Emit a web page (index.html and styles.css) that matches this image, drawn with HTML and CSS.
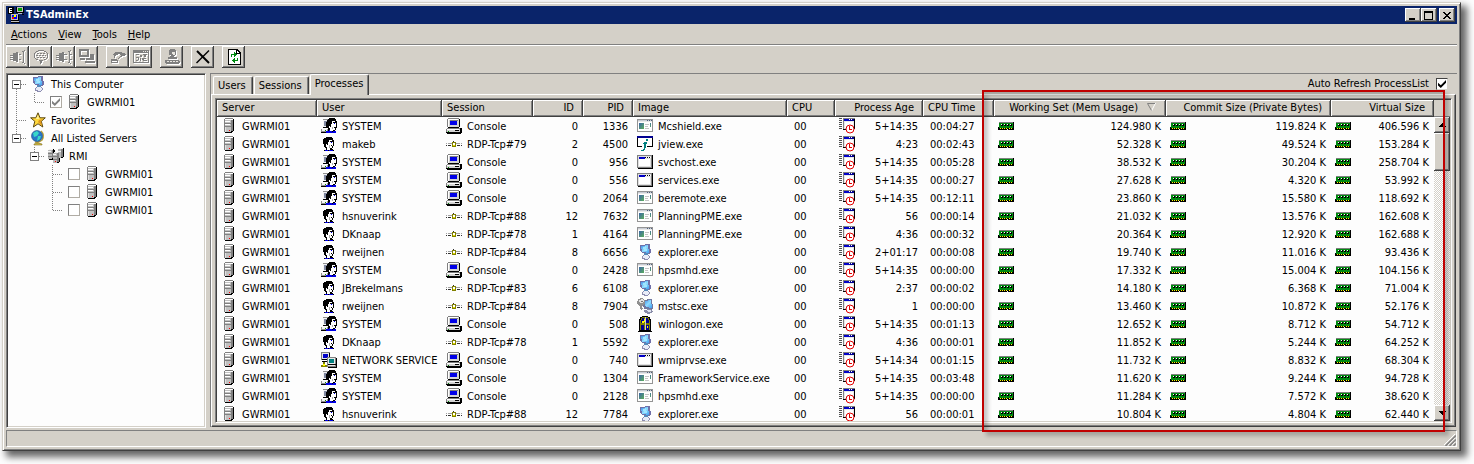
FILE: index.html
```html
<!DOCTYPE html>
<html lang="en">
<head>
<meta charset="utf-8">
<title>TSAdminEx</title>
<link rel="stylesheet" href="styles.css">
</head>
<body>
<svg class="sprite" aria-hidden="true">
  <linearGradient id="g-screen" x1="0" y1="0" x2="1" y2="1"><stop offset="0" stop-color="#3a8ae8"/><stop offset=".5" stop-color="#8fdcff"/><stop offset="1" stop-color="#3f9cf0"/></linearGradient>
  <linearGradient id="g-exe" x1="0" y1="0" x2="1" y2="1"><stop offset="0" stop-color="#3c66a8"/><stop offset="1" stop-color="#5cae5c"/></linearGradient>
  <symbol id="server" viewBox="0 0 16 16">
    <path fill="#808080" d="M4 0h8v1h-8zM3 1h1v13h-1z"/>
    <path fill="#000" d="M12 1h1v12h-1v1h-1v1h-7v-1h6v-1h1v-1h1z"/>
    <path fill="#c0c0c0" d="M4 2h6v12h-6z"/>
    <path fill="#808080" d="M10 2h2v11h-2z"/>
    <path fill="#fff" d="M4 1h7v1h-7zM4 3h5v1h-5zM4 6h5v1h-5z"/>
    <path fill="#808080" d="M4 5h6v1h-6zM4 8h6v1h-6z"/>
    <path fill="#e0e0e0" d="M4 9h1v5h-1z"/><path fill="#f00" d="M8 12h1v1h-1z"/>
  </symbol>
  <symbol id="servers" viewBox="0 0 16 16">
    <path fill="#000" d="M1 1h5v1h1v9h-1v1h-5zM11 0h5v9h-1v1h-4zM6 4h6v10h-1v1h-6v-1h1z"/>
    <path fill="#b8b8b8" d="M0 2h4v9h-4zM10 1h3v9h-3zM5 5h4v10h-4z"/>
    <path fill="#f4f4f4" d="M1 1h4v1h-4zM0 3h3v1h-3zM11 0h4v1h-4zM10 3h3v1h-3zM6 4h4v1h-4zM5 6h3v1h-3z"/>
    <path fill="#808080" d="M0 5h4v1h-4zM0 8h4v1h-4zM13 1h2v8h-2zM9 5h2v9h-2zM5 8h4v1h-4zM5 11h4v1h-4zM4 2h1v8h-1z"/>
    <path fill="#f00" d="M7 13h1v1h-1z"/>
  </symbol>
  <symbol id="console" viewBox="0 0 16 16">
    <path fill="#808080" d="M2 0h11v1h-11zM1 1h1v8h-1zM1 10h13v1h-13zM0 11h1v3h-1z"/>
    <path fill="#000" d="M13 1h1v8h-1v1h-11v-1h10v-8zM14 10h2v5h-1v1h-14v-1h-1v-1h14z"/>
    <path fill="#d4d4d4" d="M2 1h11v8h-11zM1 11h13v3h-13z"/>
    <path fill="#fff" d="M2 1h10v1h-10zM2 2h1v7h-1zM1 11h12v1h-12z"/>
    <path fill="#808080" d="M4 2h8v1h-8z"/><path fill="#0000e8" d="M4 3h7v4h-7z"/>
    <path fill="#000" d="M9 12h4v1h-4z"/><path fill="#008000" d="M2 13h1v1h-1z"/>
  </symbol>
  <symbol id="rdp" viewBox="0 0 16 16">
    <path fill="#a0a0a0" d="M0 7h1v1h-1zM2 7h4v1h-4zM10 7h4v1h-4zM15 7h1v1h-1z"/>
    <path fill="#303030" d="M0 9h1v1h-1zM2 9h3v1h-3zM11 9h3v1h-3zM15 9h1v1h-1zM7 5h1v1h-1z"/>
    <path fill="#808000" d="M6 6h4v5h-4z"/><path fill="#fff" d="M7 7h2v2h-2z"/><path fill="#e8e000" d="M7 9h2v1h-2z"/>
  </symbol>
  <symbol id="user" viewBox="0 0 16 16">
    <path fill="#000" d="M5 1h6v1h1v2h1v6h-1v2h-1v1h1v1h1v1h-10v-1h2v-2h-1v-1h-1v-3h-1v-5h1v-1h2z"/>
    <path fill="#fff" d="M8 4h3v1h1v5h-1v2h-2v2h-3v-3h-1v-3h1v1h1v-3h1z"/>
    <path fill="#0000e8" d="M10 6h1v1h-1zM4 14h3v1h-3zM8 14h4v1h-4z"/><path fill="#b0b0b0" d="M8 9h1v3h-1z"/>
    <path fill="#000" d="M9 5h3v1h-3zM10 9h1v1h-1z"/>
  </symbol>
  <symbol id="system" viewBox="0 0 16 16">
    <path fill="#909090" d="M2 1h6v9h-6zM0 11h7v3h-7z"/>
    <path fill="#f4f4f4" d="M2 2h4v7h-4zM1 11h5v2h-5z"/><path fill="#8088a0" d="M3 3h3v5h-3z"/>
    <path fill="#000" d="M0 14h7v1h-7zM2 9h4v1h-4z"/>
    <path fill="#000" d="M8 0h6v1h1v2h1v7h-1v2h-1v1h1v2h-9v-2h1v-3h-1v-1h-1v-5h1v-2h1v-1h1z"/>
    <path fill="#fff" d="M11 3h3v1h1v5h-1v3h-2v1h-3v-3h-1v-2h1v1h1v-3h1z"/>
    <path fill="#0000e8" d="M13 5h1v1h-1zM5 13h3v-1h1v1h2v1h1v-1h3v2h-10z"/><path fill="#008000" d="M4 12h1v1h-1z"/>
    <path fill="#000" d="M12 4h3v1h-3zM13 9h1v1h-1z"/><path fill="#b0b0b0" d="M11 9h1v2h-1z"/>
  </symbol>
  <symbol id="network" viewBox="0 0 16 16">
    <path fill="#808080" d="M0 0h9v8h-9z"/><path fill="#e8e8e8" d="M1 1h7v6h-7z"/><path fill="#0000c8" d="M2 2h5v4h-5z"/>
    <path fill="#000" d="M8 1h1v7h-8v-1h7zM1 9h6v1h-6zM15 6h1v10h-9v-1h8z"/>
    <path fill="#808080" d="M6 5h9v10h-9z"/><path fill="#e8e8e8" d="M7 6h7v8h-7z"/><path fill="#008080" d="M8 7h5v4h-5z"/><path fill="#000" d="M7 12h8v1h-8z"/>
    <path fill="#808000" d="M2 10h2v3h2v2h-6v-2h2z"/><path fill="#ff0" d="M2 12h2v2h-2z"/>
  </symbol>
  <symbol id="exe" viewBox="0 0 16 16">
    <path fill="#949494" d="M0 1h16v13h-16z"/><path fill="#fff" d="M1 4h14v9h-14z"/><path fill="#c8ccd4" d="M1 2h14v1h-14z"/><path fill="#e8e8e8" d="M1 3h14v1h-14z"/>
    <path fill="#50607c" d="M10 2h1v1h-1zM12 2h1v1h-1zM14 2h1v1h-1z"/>
    <path fill="url(#g-exe)" d="M2 5h5v6h-5z"/><path fill="url(#g-exe)" d="M13 5h1v4h-1z"/><path fill="#c4c4c4" d="M8 6h4v1h-4zM8 8h3v1h-3zM8 10h4v1h-4z"/>
  </symbol>
  <symbol id="winapp" viewBox="0 0 16 16">
    <path fill="#808080" d="M0 1h15v13h-15z"/><path fill="#000" d="M15 1h1v14h-15v-1h14z"/><path fill="#e0e0e0" d="M1 2h13v11h-13z"/><path fill="#fff" d="M2 5h11v7h-11z"/>
    <path fill="#0000c8" d="M2 3h6v2h-6z"/><path fill="#000" d="M8 3h6v1h-6z"/><path fill="#fff" d="M9 3h1v1h-1zM11 3h1v1h-1zM13 3h1v1h-1z"/>
  </symbol>
  <symbol id="jview" viewBox="0 0 16 16">
    <path fill="#000" d="M0 0h16v11h-16z"/><path fill="#fff" d="M1 2h14v8h-14zM5 10h5v2h-5z"/><path fill="#000090" d="M0 0h16v2h-16z"/>
    <path fill="#008080" d="M9 3h2v2h-2zM7 6h3v2h-1v4h-1v2h-1v1h-3v-1h2v-1h1v-5h-1z"/>
  </symbol>
  <symbol id="computer" viewBox="0 0 16 16">
    <path fill="#7070a8" d="M3 1l9-1 1 1 1 8-2 1-7-1-2-2z"/><path fill="url(#g-screen)" d="M4 2l7-1 1 8-7-1z"/>
    <path fill="#9fe6ff" d="M6 3l3-1 1 5-3 0z"/><path fill="#58b" d="M7 9h4v2h-4z"/>
    <path fill="#8c8cb0" d="M6 11h5l2 2-1 2-3 1-4-1 0-2z"/><path fill="#e8ecf8" d="M7 11h3l2 2-2 2-4-1z"/>
  </symbol>
  <symbol id="mstsc" viewBox="0 0 16 16">
    <path fill="#7078a0" d="M5 2l9-1 1 1 1 8-2 2-7-1z"/><path fill="url(#g-screen)" d="M7 3l7-1 1 8-6-1z"/>
    <path fill="#888ca8" d="M7 12l6-1 3 2-1 2-4 1-4-2z"/><path fill="#e0e4f0" d="M9 12l4 0 2 1-3 1z"/>
    <path fill="#909090" d="M1 1l4-1 3 2v3l-3 3 1 3-2 1-1-3-3-3z"/><path fill="#e4e4e4" d="M2 2l3-1 2 2-2 2-2 0z"/><path fill="#777" d="M4 3h2v1h-2z"/>
  </symbol>
  <symbol id="winlogon" viewBox="0 0 16 16">
    <path fill="#000" d="M5 0h6v1h2v2h1v12h1v1h-14v-1h1v-12h1v-2h2z"/><path fill="#808000" d="M5 1h6v1h1v2h1v10h-10v-10h1v-2h1z"/>
    <path fill="#000090" d="M5 2h2v5h-3v-3h1zM9 2h2v2h1v3h-3zM4 9h3v5h-3zM9 9h3v5h-3z"/><path fill="#ff0" d="M7 3h1v3h-1zM5 5h2v2h-2zM10 10h1v2h-1z"/><path fill="#d0d0d0" d="M8 1h1v13h-1z"/>
  </symbol>
  <symbol id="age" viewBox="0 0 16 16">
    <path stroke="#505050" stroke-dasharray="1 1" stroke-width="3" fill="none" d="M1.500 0v12"/>
    <path fill="#808080" d="M4 0h12v1h-12zM4 0h1v12h-1z"/><path fill="#000" d="M15 1h1v10h-1zM4 11h3v1h-3z"/><path fill="#e8e8e8" d="M5 1h10v10h-10z"/><path fill="#fff" d="M6 4h8v6h-8z"/>
    <path fill="#0000c8" d="M5 1h6v2h-6z"/><path fill="#000090" d="M11 1h4v2h-4z"/><path fill="#fff" d="M10 1h1v1h-1zM12 1h1v1h-1z"/>
    <circle cx="11" cy="11" r="4" fill="#fff" stroke="#e00000" shape-rendering="auto"/><path fill="#e00000" d="M10 8h1v4h-1zM11 11h2v1h-2z"/>
  </symbol>
  <symbol id="memory" viewBox="0 0 16 16">
    <path fill="#000" d="M15 4h1v8h-6v-1h-1v1h-9v-3h1v-1h14z"/><path fill="#808080" d="M1 4h14v1h-14z"/><path fill="#008a10" d="M1 5h14v5h-14z"/>
    <path fill="#000" d="M3 6h2v2h-2zM6 6h2v2h-2zM9 6h2v2h-2zM12 6h2v2h-2z"/><path fill="#fff" d="M3 6h1v1h-1zM6 6h1v1h-1zM9 6h1v1h-1zM12 6h1v1h-1z"/>
    <path fill="#ff0" d="M2 10h1v1h-1zM4 10h1v1h-1zM6 10h1v1h-1zM8 10h1v1h-1zM11 10h1v1h-1zM13 10h1v1h-1z"/>
  </symbol>
  <symbol id="star" viewBox="0 0 16 16">
    <path shape-rendering="auto" fill="#ffd83c" stroke="#5c4810" d="M8 .8l2 5h5.300l-4 3.500 1.500 5.700-4.800-3.200-4.600 3.200 1.400-5.700-4.200-3.500h5.200z"/><path shape-rendering="auto" fill="#fff2a0" d="M8 3l1 4h-3z"/><path shape-rendering="auto" fill="#e0981c" d="M8 10l4 4-1-5 2-2-4 1z"/>
  </symbol>
  <symbol id="globe" viewBox="0 0 16 16">
    <g shape-rendering="auto"><path fill="none" stroke="#b8a038" stroke-width="1.500" d="M11 1q4 4 1 9-3 3-7 2M8 12v2"/><circle cx="7" cy="6" r="5.500" fill="#2878c8" stroke="#204880" stroke-width=".6"/><path fill="#38d8c8" d="M3 3l4-2 2 2-2 3-3 1zM8 6l3 0-1 3-3 2z"/><path fill="#d8c040" stroke="#80702c" stroke-width=".6" d="M4 14q4-2 8 0v1h-8z"/></g>
  </symbol>
  <symbol id="app" viewBox="0 0 16 16">
    <path fill="#000" d="M0 0h6v7h-6zM8 0h8v6h-8z"/><path fill="#fff" d="M1 1h3v1h-2v1h2v1h-2v1h2v1h-3z"/>
    <path fill="#c0c0c0" d="M9 0h6v5h-6zM3 7h7v6h-7zM10 6h4v1h-4zM3 14h8v1h-8z"/><path fill="#00a000" d="M10 1h4v3h-4z"/>
    <path fill="#0000ff" d="M4 8h5v4h-5z"/><path fill="#ff0" d="M6 8h2v2h-2z"/><path fill="#f00" d="M4 10h2v2h-2z"/><path fill="#0c0" d="M5 9h1v1h-1z"/>
    <path fill="#000" d="M10 8h1v6h-8v-1h7zM3 15h9v1h-9zM14 7h2v1h-2z"/>
  </symbol>
  <symbol id="line-tee" viewBox="0 0 18 18"><path d="M8.500 0v18M9 9.500h9"/></symbol>
  <symbol id="line-end" viewBox="0 0 18 18"><path d="M8.500 0v10M9 9.500h9"/></symbol>
  <symbol id="line-down" viewBox="0 0 18 18"><path d="M8.500 0v18"/></symbol>
  <symbol id="line-first" viewBox="0 0 18 18"><path d="M8.500 10v8M9 9.500h9"/></symbol>
  <symbol id="minus" viewBox="0 0 9 9"><path fill="#808080" d="M0 0h9v9h-9z"/><path fill="#fff" d="M1 1h7v7h-7z"/><path fill="#000" d="M2 4h5v1h-5z"/></symbol>
</svg>

<main class="window">
  <header class="titlebar">
    <svg class="icon"><use href="#app"/></svg>
    <h1 class="title">TSAdminEx</h1>
    <div class="caption-buttons">
      <button class="caption" aria-label="Minimize"><svg viewBox="0 0 10 9"><path d="M1 7h6v2h-6z"/></svg></button>
      <button class="caption" aria-label="Maximize"><svg viewBox="0 0 10 9"><path fill-rule="evenodd" d="M0 0h9v9h-9zM1 2v6h7v-6z"/></svg></button>
      <button class="caption caption-close" aria-label="Close"><svg viewBox="0 0 10 9"><path d="M1 1h2v1h1v1h2v-1h1v-1h2v1h-1v1h-1v1h-1v1h1v1h1v1h1v1h-2v-1h-1v-1h-2v1h-1v1h-2v-1h1v-1h1v-1h1v-1h-1v-1h-1v-1h-1z"/></svg></button>
    </div>
  </header>

  <nav class="menubar" aria-label="Menu">
    <button class="menu"><u>A</u>ctions</button>
    <button class="menu"><u>V</u>iew</button>
    <button class="menu"><u>T</u>ools</button>
    <button class="menu"><u>H</u>elp</button>
  </nav>

  <div class="toolbar" role="toolbar" aria-label="Actions">
    <div class="tool-group">
      <button class="tool" disabled aria-label="Connect"><svg viewBox="0 0 16 16"><path d="M0 5h3v-1h3v-1h2v10h-2v-1h-3v-1h-3v-1h3v-1h-3v-1h3v-1h-3v-1h3v-1h-3zM9 5h2v1h-2zM9 10h2v1h-2zM12 2h2v-1h1v1h-1v12h1v1h-1v-1h-2v-1h1v-10h-1z"/></svg></button>
      <button class="tool" disabled aria-label="Send message"><svg viewBox="0 0 16 16"><path fill-rule="evenodd" d="M5 1h6v1h2v1h1v1h1v5h-1v1h-1v1h-3v1h-1v2h-1v1h-1v-3h-1v-1h-3v-1h-1v-1h-1v-5h1v-1h1v-1h2zM5 2v1h-2v1h-1v5h1v1h2v1h6v-1h2v-1h1v-5h-1v-1h-2v-1z"/><path d="M4 4h2v1h-2zM7 4h2v1h-2zM10 4h2v1h-2zM3 6h2v1h-2zM6 6h2v1h-2zM9 6h2v1h-2zM12 6h1v1h-1zM4 8h2v1h-2zM7 8h2v1h-2zM10 8h2v1h-2z"/></svg></button>
      <button class="tool" disabled aria-label="Disconnect"><svg viewBox="0 0 16 16"><path d="M0 5h3v-1h3v-1h2v2h3v1h-3v4h3v1h-3v2h-2v-1h-3v-1h-3v-1h3v-1h-3v-1h3v-1h-3v-1h3v-1h-3zM12 2h2v-1h1v1h-1v3h2v1h-2v4h2v1h-2v3h1v1h-1v-1h-2v-1h1v-10h-1z"/></svg></button>
      <button class="tool" disabled aria-label="Remote control"><svg viewBox="0 0 16 16"><path fill-rule="evenodd" d="M0 0h10v8h-10zM2 2v4h6v-4z"/><path d="M1 9h5v2h-5zM11 5h4v6h-8v-2h4zM6 12h10v2h-10z"/></svg></button>
    </div>
    <div class="tool-group">
      <button class="tool" disabled aria-label="Reset"><svg viewBox="0 0 16 16"><path d="M4 4h1v-1h7v1h3v1h1v1h-1v1h-3v1h-2v1h-1v1h-1v-1h1v-1h1v-1h1v-1h-1v-1h-2v1h-2v1h-1v2h-1v-3h-1zM1 10h6v1h1v3h-1v-2h-5v1h5v1h-6z"/></svg></button>
      <button class="tool" disabled aria-label="Status"><svg viewBox="0 0 16 16"><path fill-rule="evenodd" d="M0 1h16v13h-16zM1 4v9h14v-9zM3 5h3v1h-3zM7 6h2v2h-2zM10 5h4v1h-1v2h-2v-2h-1zM3 8h3v3h-1v-2h-2zM3 11h2v1h-2zM7 9h1v3h-1zM9 9h4v1h-2v1h3v1h-4z"/><path class="cut" d="M10 2h1v1h-1zM12 2h1v1h-1zM14 2h1v1h-1z"/></svg></button>
    </div>
    <div class="tool-group">
      <button class="tool" disabled aria-label="Log off"><svg viewBox="0 0 16 16"><path d="M6 0h5v1h1v5h-1v1h-1v1h3v2h-9v-2h2v-1h1v-1h-2v-5h1zM1 11h14v1h1v2h-1v1h-13v-1h-1z"/><path class="cut" d="M8 3h3v3h-2v-1h-1zM3 12h2v1h-2zM6 12h2v1h-2zM9 12h2v1h-2zM12 12h2v1h-2z"/></svg></button>
    </div>
    <div class="tool-group">
      <button class="tool" aria-label="End process"><svg viewBox="0 0 16 16"><path fill="none" stroke="#000" stroke-width="2" shape-rendering="auto" d="M2 2l12 12"/><path fill="none" stroke="#000" stroke-width="1.500" shape-rendering="auto" d="M14 1.500L1.500 14"/></svg></button>
    </div>
    <div class="tool-group">
      <button class="tool" aria-label="Refresh"><svg viewBox="0 0 16 16"><path fill="#000" d="M2 0h9l4 4v12h-13z"/><path fill="#fff" d="M3 1h7v4h4v10h-11z"/><path fill="#fff" d="M11 2l2 2h-2z"/><path fill="#008a10" d="M5 5h3v-2h1v1h1v1h1v1h-1v1h-1v1h-1v-2h-2v2h-1zM12 12h-3v2h-1v-1h-1v-1h-1v-1h1v-1h1v-1h1v2h2v-2h1z"/></svg></button>
    </div>
  </div>

  <div class="workspace">
    <aside class="tree" id="tree" aria-label="Servers"></aside>

    <section class="panel">
      <div class="tabbar">
        <div class="tabs" role="tablist">
          <button class="tab" role="tab">Users</button>
          <button class="tab" role="tab">Sessions</button>
          <button class="tab tab-active" role="tab" aria-selected="true">Processes</button>
        </div>
        <label class="auto-refresh">Auto Refresh ProcessList <input type="checkbox" class="check check-solid" checked></label>
      </div>
      <div class="page">
        <div class="list">
          <div class="list-view">
            <table class="processes">
              <colgroup><col class="w-server"><col class="w-user"><col class="w-session"><col class="w-num"><col class="w-num"><col class="w-image"><col class="w-cpu"><col class="w-age"><col class="w-time"><col class="w-working"><col class="w-commit"><col class="w-virtual"></colgroup>
              <thead><tr>
                <th>Server</th><th>User</th><th>Session</th><th class="right">ID</th><th class="right">PID</th><th>Image</th><th>CPU</th><th class="right">Process Age</th><th>CPU Time</th>
                <th class="right">Working Set (Mem Usage)<svg class="sort" viewBox="0 0 9 8"><path fill="#fff" d="M8 0h1l-4 8h-1z"/><path fill="none" stroke="#808080" d="M8 .5h-7.500l4 7"/></svg></th>
                <th class="right">Commit Size (Private Bytes)</th><th class="right">Virtual Size</th>
              </tr></thead>
              <tbody id="rows"></tbody>
            </table>
          </div>
          <div class="scroll-column">
            <div class="header-filler"></div>
            <div class="scrollbar">
              <button class="scroll-button" aria-label="Scroll up"><svg viewBox="0 0 7 4"><path d="M3 0h1v1h1v1h1v1h1v1h-7v-1h1v-1h1v-1h1z"/></svg></button>
              <div class="thumb"></div>
              <button class="scroll-button scroll-down" aria-label="Scroll down"><svg viewBox="0 0 7 4"><path d="M0 0h7v1h-1v1h-1v1h-1v1h-1v-1h-1v-1h-1v-1h-1z"/></svg></button>
            </div>
          </div>
        </div>
      </div>
      <div class="highlight"></div>
    </section>
  </div>

  <footer class="statusbar">
    <svg class="grip" viewBox="0 0 12 12"><path stroke="#fff" d="M0 11L11 0M4 11L11 4M8 11L11 8"/><path stroke="#808080" stroke-width="1.500" d="M1.500 12L12 1.500M5.500 12L12 5.500M9.500 12L12 9.500"/></svg>
  </footer>
</main>
<script src="app.js"></script>
</body>
</html>
```
FILE: styles.css
```css
* { box-sizing: border-box; }

html, body { height: 100%; }

body {
  margin: 0;
  padding: 2px 13px 13px 2px;
  background: #fdfdfd;
  font: 11px/14px "DejaVu Sans Condensed", "Noto Sans", sans-serif;
  color: #000;
  overflow: hidden;
}

button, input { font: inherit; color: inherit; margin: 0; padding: 0; border: 0; border-radius: 0; }
button { background: #d4d0c8; }
svg { display: block; flex: none; }
.sprite { position: absolute; width: 0; height: 0; }
.icon { width: 16px; height: 16px; shape-rendering: crispEdges; }

.window {
  height: 100%;
  display: flex;
  flex-direction: column;
  padding: 3px;
  background: #d4d0c8;
  border: 1px solid;
  border-color: #d4d0c8 #404040 #404040 #d4d0c8;
  box-shadow: inset 1px 1px #fff, inset -1px -1px #808080, 5px 5px 7px 1px rgba(0, 0, 0, .6);
}

.titlebar {
  display: flex;
  align-items: center;
  height: 18px;
  padding: 0 2px;
  background: #0a246a;
  color: #fff;
}
.title { flex: 1; margin: 0 0 0 2px; font-size: 11px; font-weight: bold; }
.caption-buttons { display: flex; }
.caption {
  display: flex;
  align-items: center;
  justify-content: center;
  width: 16px;
  height: 14px;
  box-shadow: inset -1px -1px #404040, inset 1px 1px #fff, inset -2px -2px #808080;
}
.caption svg { width: 10px; height: 9px; shape-rendering: crispEdges; }
.caption-close { margin-left: 2px; }

.menubar { display: flex; gap: 11px; height: 20px; padding: 1px 0 0 5px; }

.toolbar {
  display: flex;
  gap: 8px;
  height: 29px;
  padding-top: 1px;
  border-top: 1px solid #808080;
  box-shadow: inset 0 1px #fff;
}
.tool-group { display: flex; }
.tool {
  display: flex;
  align-items: center;
  justify-content: center;
  width: 23px;
  height: 22px;
  box-shadow: inset -1px -1px #404040, inset 1px 1px #fff, inset -2px -2px #808080;
}
.tool svg { width: 16px; height: 16px; shape-rendering: crispEdges; }
.tool:disabled svg { fill: #808080; filter: drop-shadow(1px 1px 0 #fff); }
.cut { fill: #e8e6e0; }

.workspace { flex: 1; min-height: 0; display: flex; gap: 4px; }

.tree {
  width: 200px;
  padding: 1px;
  background: #fdfdfd;
  border: 1px solid;
  border-color: #808080 #fff #fff #808080;
  box-shadow: inset 1px 1px #404040, inset -1px -1px #d4d0c8;
}
.node { display: flex; align-items: center; height: 18px; }
.slot { position: relative; width: 18px; height: 18px; }
.slot > svg { width: 18px; height: 18px; stroke: #808080; stroke-dasharray: 1 1; fill: none; shape-rendering: crispEdges; }
.expander { position: absolute; left: 4px; top: 5px; width: 9px; height: 9px; }
.expander svg { width: 9px; height: 9px; shape-rendering: crispEdges; }
.node-label { display: flex; align-items: center; }
.node-label span { padding-top: 2px; }
.node .icon { margin: 0 5px 0 4px; }
.node .check { margin-left: 6px; }

.check {
  appearance: none;
  display: grid;
  place-items: center;
  width: 12px;
  height: 12px;
  background: #fff;
  border: 1px solid #b0aca4;
  border-top-color: #808080;
  border-left-color: #808080;
}
.check:checked::before {
  content: "";
  width: 8px;
  height: 8px;
  background: #808080;
  clip-path: polygon(0 35%, 35% 65%, 100% 0, 100% 35%, 35% 100%, 0 70%);
}
.check-solid { border-color: #404040 #d4d0c8 #d4d0c8 #404040; }
.check-solid:checked::before { background: #000; }

.panel {
  position: relative;
  flex: 1;
  min-width: 0;
  display: flex;
  flex-direction: column;
  border-top: 1px solid #808080;
  border-left: 1px solid #808080;
  margin-bottom: 1px;
}
.tabbar { display: flex; justify-content: space-between; height: 20px; padding-left: 2px; }
.tabs { display: flex; align-items: flex-end; }
.tab {
  height: 18px;
  padding: 0 6px 0 4px;
  margin-right: 1px;
  border-top: 1px solid #fff;
  border-left: 1px solid #fff;
  border-right: 1px solid #404040;
  border-radius: 2px 2px 0 0;
  box-shadow: inset -1px 0 #808080;
}
.tab-active { position: relative; height: 21px; margin-bottom: -1px; padding: 0 5px 3px 4px; }
.auto-refresh { display: flex; align-items: center; gap: 7px; padding-right: 9px; }

.page {
  flex: 1;
  min-height: 0;
  display: flex;
  padding: 3px;
  border: 1px solid;
  border-color: #fff #404040 #404040 #fff;
  box-shadow: inset -1px -1px #808080;
  margin-right: 1px;
}
.list {
  flex: 1;
  min-width: 0;
  display: flex;
  padding: 1px;
  background: #fdfdfd;
  border: 1px solid;
  border-color: #808080 #fff #fff #808080;
  box-shadow: inset 1px 1px #404040, inset -1px -1px #d4d0c8;
}
.list-view { flex: 1; min-width: 0; overflow: hidden; }

.processes { width: 100%; table-layout: fixed; border-spacing: 0; white-space: nowrap; }
.w-server { width: 100px; }
.w-user { width: 125px; }
.w-session { width: 91px; }
.w-num { width: 50px; }
.w-image { width: 154px; }
.w-cpu { width: 48px; }
.w-age { width: 88px; }
.w-time { width: 71px; }
.w-working { width: 172px; }
.w-commit { width: 165px; }
.w-virtual { width: 103px; }

.processes th {
  height: 17px;
  padding: 1px 8px 1px 5px;
  background: #d4d0c8;
  border-right: 1px solid #404040;
  border-bottom: 1px solid #404040;
  box-shadow: inset 1px 1px #fff, inset -1px -1px #808080;
  font-weight: normal;
  line-height: 14px;
  text-align: left;
}
.processes td { height: 18px; padding: 0 5px 0 4px; }
.processes td.plain { padding: 2px 5px 0 7px; }
.processes td.right { padding-top: 2px; }
.processes .right { text-align: right; }
.cell { display: flex; align-items: center; gap: 5px; }
.cell span { padding-top: 2px; }
.cell-end { justify-content: space-between; }
.sort { display: inline-block; width: 9px; height: 8px; margin: 0 1px 0 9px; }

.scroll-column { width: 16px; display: flex; flex-direction: column; }
.header-filler { height: 17px; background: #d4d0c8; border-bottom: 1px solid #808080; }
.scrollbar {
  flex: 1;
  display: flex;
  flex-direction: column;
  background: repeating-conic-gradient(#fff 0 25%, #d4d0c8 0 50%) 0 0 / 2px 2px;
}
.scroll-button, .thumb {
  background: #d4d0c8;
  box-shadow: inset -1px -1px #404040, inset 1px 1px #fff, inset -2px -2px #808080;
}
.scroll-button { display: grid; place-items: center; height: 16px; }
.scroll-button svg { width: 7px; height: 4px; shape-rendering: crispEdges; }
.scroll-down { margin-top: auto; }
.thumb { height: 38px; }

.highlight {
  position: absolute;
  top: 16px;
  right: 12px;
  bottom: -5px;
  width: 463px;
  border: 2px solid #c00000;
  box-shadow: 4px 4px 4px rgba(0, 0, 0, .22), inset 4px 4px 4px rgba(0, 0, 0, .22);
  pointer-events: none;
}

.statusbar {
  display: flex;
  align-items: flex-end;
  justify-content: flex-end;
  height: 17px;
  margin-top: 2px;
  border: 1px solid;
  border-color: #808080 #fff #fff #808080;
}
.grip { width: 12px; height: 12px; }
```
FILE: app.js
```js
const icon = name => `<svg class="icon" aria-hidden="true"><use href="#${name}"/></svg>`;

const nodes = [
  { slots: ["first"], expander: true, icon: "computer", text: "This Computer" },
  { slots: ["down", "end"], check: "checked", icon: "server", text: "GWRMI01" },
  { slots: ["tee"], icon: "star", text: "Favorites" },
  { slots: ["end"], expander: true, icon: "globe", text: "All Listed Servers" },
  { slots: ["", "end"], expander: true, icon: "servers", text: "RMI" },
  { slots: ["", "", "tee"], check: " ", icon: "server", text: "GWRMI01" },
  { slots: ["", "", "tee"], check: " ", icon: "server", text: "GWRMI01" },
  { slots: ["", "", "end"], check: " ", icon: "server", text: "GWRMI01" }
];

document.getElementById("tree").innerHTML = nodes.map(n => {
  const slots = n.slots.map((s, i) => {
    const line = s ? `<svg><use href="#line-${s}"/></svg>` : "";
    const toggle = n.expander && i === n.slots.length - 1
      ? `<button class="expander" aria-label="Collapse"><svg><use href="#minus"/></svg></button>` : "";
    return `<span class="slot">${line}${toggle}</span>`;
  }).join("");
  const check = n.check ? `<input type="checkbox" class="check" ${n.check}>` : "";
  const tag = n.check ? "label" : "div";
  return `<div class="node">${slots}<${tag} class="node-label">${check}${icon(n.icon)}<span>${n.text}</span></${tag}></div>`;
}).join("");

// user icon, user, session, id, pid, image icon, image, age, cpu time, working set, commit, virtual
const processes = [
  ["system", "SYSTEM", "Console", 0, 1336, "exe", "Mcshield.exe", "5+14:35", "00:04:27", "124.980", "119.824", "406.596"],
  ["user", "makeb", "RDP-Tcp#79", 2, 4500, "jview", "jview.exe", "4:23", "00:02:43", "52.328", "49.524", "153.284"],
  ["system", "SYSTEM", "Console", 0, 956, "winapp", "svchost.exe", "5+14:35", "00:05:28", "38.532", "30.204", "258.704"],
  ["system", "SYSTEM", "Console", 0, 556, "winapp", "services.exe", "5+14:35", "00:00:27", "27.628", "4.320", "53.992"],
  ["system", "SYSTEM", "Console", 0, 2064, "exe", "beremote.exe", "5+14:35", "00:12:11", "23.860", "15.580", "118.692"],
  ["user", "hsnuverink", "RDP-Tcp#88", 12, 7632, "exe", "PlanningPME.exe", "56", "00:00:14", "21.032", "13.576", "162.608"],
  ["user", "DKnaap", "RDP-Tcp#78", 1, 4164, "exe", "PlanningPME.exe", "4:36", "00:00:32", "20.364", "12.920", "162.688"],
  ["user", "rweijnen", "RDP-Tcp#84", 8, 6656, "computer", "explorer.exe", "2+01:17", "00:00:08", "19.740", "11.016", "93.436"],
  ["system", "SYSTEM", "Console", 0, 2428, "exe", "hpsmhd.exe", "5+14:35", "00:00:00", "17.332", "15.004", "104.156"],
  ["user", "JBrekelmans", "RDP-Tcp#83", 6, 6108, "computer", "explorer.exe", "2:37", "00:00:02", "14.180", "6.368", "71.004"],
  ["user", "rweijnen", "RDP-Tcp#84", 8, 7904, "mstsc", "mstsc.exe", "1", "00:00:00", "13.460", "10.872", "52.176"],
  ["system", "SYSTEM", "Console", 0, 508, "winlogon", "winlogon.exe", "5+14:35", "00:01:13", "12.652", "8.712", "54.712"],
  ["user", "DKnaap", "RDP-Tcp#78", 1, 5592, "computer", "explorer.exe", "4:36", "00:00:01", "11.852", "5.244", "64.252"],
  ["network", "NETWORK SERVICE", "Console", 0, 740, "winapp", "wmiprvse.exe", "5+14:34", "00:01:15", "11.732", "8.832", "68.304"],
  ["system", "SYSTEM", "Console", 0, 1304, "exe", "FrameworkService.exe", "5+14:35", "00:03:48", "11.620", "9.244", "94.728"],
  ["system", "SYSTEM", "Console", 0, 2128, "exe", "hpsmhd.exe", "5+14:35", "00:00:00", "11.284", "7.572", "38.620"],
  ["user", "hsnuverink", "RDP-Tcp#88", 12, 7784, "computer", "explorer.exe", "56", "00:00:01", "10.804", "4.804", "62.440"]
];

const cell = (name, text) => `<td><div class="cell">${icon(name)}<span>${text}</span></div></td>`;
const endCell = (name, text) => `<td><div class="cell cell-end">${icon(name)}<span>${text}</span></div></td>`;

document.getElementById("rows").innerHTML = processes.map(p => `<tr>
  ${cell("server", "GWRMI01")}${cell(p[0], p[1])}${cell(p[2] === "Console" ? "console" : "rdp", p[2])}
  <td class="right">${p[3]}</td><td class="right">${p[4]}</td>${cell(p[5], p[6])}
  <td class="plain">00</td>${endCell("age", p[7])}<td class="plain">${p[8]}</td>
  ${endCell("memory", p[9] + " K")}${endCell("memory", p[10] + " K")}${endCell("memory", p[11] + " K")}
</tr>`).join("");
```
